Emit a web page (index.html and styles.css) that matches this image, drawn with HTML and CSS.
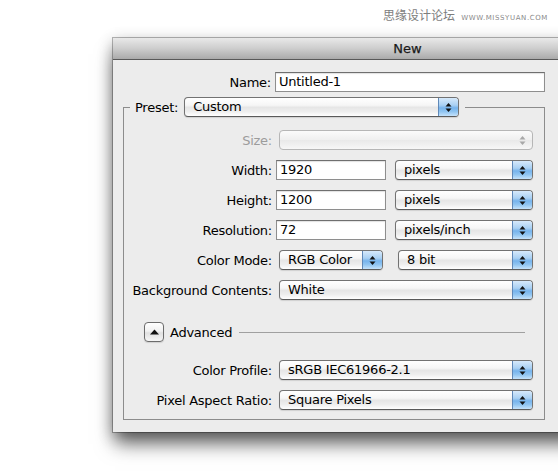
FILE: index.html
```html
<!DOCTYPE html>
<html>
<head>
<meta charset="utf-8">
<title>New</title>
<link rel="stylesheet" href="styles.css">
</head>
<body>
<div class="page">
  <div class="watermark"><span class="wm-cn">思缘设计论坛</span><span class="wm-en">WWW.MISSYUAN.COM</span></div>
  <div class="dialog">
    <div class="titlebar">New</div>
    <div class="dlg-body">
      <div class="row">
        <span class="lbl">Name:</span>
        <div class="field field-name">Untitled-1</div>
      </div>
      <fieldset class="group">
        <legend class="legend">
          <div class="legend-inner">
            <span class="lbl-preset">Preset:</span>
            <div class="popup popup-preset"><span class="val">Custom</span><span class="step"><svg width="7" height="11" viewBox="0 0 7 11"><polygon points="0.5,4.5 3.5,1 6.5,4.5"/><polygon points="0.5,6.5 3.5,10 6.5,6.5"/></svg></span></div>
          </div>
        </legend>
        <div class="rows">
          <div class="row">
            <span class="lbl lbl-disabled">Size:</span>
            <div class="popup popup-disabled popup-wide"><span class="val"></span><span class="step"><svg width="7" height="11" viewBox="0 0 7 11"><polygon points="0.5,4.5 3.5,1 6.5,4.5"/><polygon points="0.5,6.5 3.5,10 6.5,6.5"/></svg></span></div>
          </div>
          <div class="row">
            <span class="lbl">Width:</span>
            <div class="field field-num">1920</div>
            <div class="popup popup-unit"><span class="val">pixels</span><span class="step"><svg width="7" height="11" viewBox="0 0 7 11"><polygon points="0.5,4.5 3.5,1 6.5,4.5"/><polygon points="0.5,6.5 3.5,10 6.5,6.5"/></svg></span></div>
          </div>
          <div class="row">
            <span class="lbl">Height:</span>
            <div class="field field-num">1200</div>
            <div class="popup popup-unit"><span class="val">pixels</span><span class="step"><svg width="7" height="11" viewBox="0 0 7 11"><polygon points="0.5,4.5 3.5,1 6.5,4.5"/><polygon points="0.5,6.5 3.5,10 6.5,6.5"/></svg></span></div>
          </div>
          <div class="row">
            <span class="lbl">Resolution:</span>
            <div class="field field-num">72</div>
            <div class="popup popup-unit"><span class="val">pixels/inch</span><span class="step"><svg width="7" height="11" viewBox="0 0 7 11"><polygon points="0.5,4.5 3.5,1 6.5,4.5"/><polygon points="0.5,6.5 3.5,10 6.5,6.5"/></svg></span></div>
          </div>
          <div class="row">
            <span class="lbl">Color Mode:</span>
            <div class="popup popup-mode"><span class="val">RGB Color</span><span class="step"><svg width="7" height="11" viewBox="0 0 7 11"><polygon points="0.5,4.5 3.5,1 6.5,4.5"/><polygon points="0.5,6.5 3.5,10 6.5,6.5"/></svg></span></div>
            <div class="popup popup-bits"><span class="val">8 bit</span><span class="step"><svg width="7" height="11" viewBox="0 0 7 11"><polygon points="0.5,4.5 3.5,1 6.5,4.5"/><polygon points="0.5,6.5 3.5,10 6.5,6.5"/></svg></span></div>
          </div>
          <div class="row">
            <span class="lbl">Background Contents:</span>
            <div class="popup popup-wide"><span class="val">White</span><span class="step"><svg width="7" height="11" viewBox="0 0 7 11"><polygon points="0.5,4.5 3.5,1 6.5,4.5"/><polygon points="0.5,6.5 3.5,10 6.5,6.5"/></svg></span></div>
          </div>
          <div class="row adv-row">
            <span class="adv-btn"><svg width="9" height="6" viewBox="0 0 9 6"><polygon points="0,5.5 4.5,0.5 9,5.5"/></svg></span>
            <span class="adv-label">Advanced</span>
            <span class="adv-line"></span>
          </div>
          <div class="row profile-row">
            <span class="lbl">Color Profile:</span>
            <div class="popup popup-wide"><span class="val">sRGB IEC61966-2.1</span><span class="step"><svg width="7" height="11" viewBox="0 0 7 11"><polygon points="0.5,4.5 3.5,1 6.5,4.5"/><polygon points="0.5,6.5 3.5,10 6.5,6.5"/></svg></span></div>
          </div>
          <div class="row">
            <span class="lbl">Pixel Aspect Ratio:</span>
            <div class="popup popup-wide"><span class="val">Square Pixels</span><span class="step"><svg width="7" height="11" viewBox="0 0 7 11"><polygon points="0.5,4.5 3.5,1 6.5,4.5"/><polygon points="0.5,6.5 3.5,10 6.5,6.5"/></svg></span></div>
          </div>
        </div>
      </fieldset>
    </div>
  </div>
</div>
</body>
</html>
```

FILE: styles.css
```css
html, body {
  margin: 0;
  padding: 0;
  background: #ffffff;
  overflow: hidden;
}

body {
  width: 558px;
  height: 473px;
  font-family: "DejaVu Sans", "Noto Sans", sans-serif;
  font-size: 13px;
  letter-spacing: -0.25px;
  color: #000;
}

.page {
  width: 558px;
  height: 473px;
  overflow: hidden;
}

.watermark {
  height: 38px;
  box-sizing: border-box;
  padding: 7px 10px 0 0;
  display: flex;
  justify-content: flex-end;
  align-items: baseline;
  color: #7d7d7d;
  letter-spacing: 0;
}

.wm-cn {
  font-family: "Noto Sans CJK SC", sans-serif;
  font-size: 12px;
  line-height: 16px;
  margin-right: 6px;
}

.wm-en {
  font-family: "DejaVu Sans", sans-serif;
  font-size: 7px;
  letter-spacing: 0.6px;
  color: #8a8a8a;
}

.dialog {
  margin-left: 113px;
  width: 589px;
  background: #ececec;
  box-shadow: 0 0 0 1px rgba(0, 0, 0, 0.28), 0 14px 18px -2px rgba(0, 0, 0, 0.55), 0 4px 14px rgba(0, 0, 0, 0.3);
}

.titlebar {
  height: 21px;
  line-height: 22px;
  text-align: center;
  border-bottom: 1px solid #585858;
  background: linear-gradient(#e9e9e9, #cdcdcd 50%, #aaaaaa);
  color: #1a1a1a;
  letter-spacing: 0;
  -webkit-text-stroke: 0.25px #1a1a1a;
}

.dlg-body {
  padding: 12px 0 12px 10px;
}

.row {
  display: flex;
  align-items: center;
  height: 20px;
}

.lbl {
  width: 148px;
  margin-right: 4px;
  text-align: right;
  white-space: nowrap;
}

.lbl-disabled {
  color: #9c9c9c;
}

.field {
  height: 20px;
  box-sizing: border-box;
  border: 1px solid #8e8e8e;
  border-top-color: #6f6f6f;
  background: #fff;
  padding-left: 3px;
  line-height: 18px;
  box-shadow: inset 0 1px 1px rgba(0, 0, 0, 0.12);
  white-space: nowrap;
}

.field-name {
  width: 270px;
}

.field-num {
  width: 110px;
}

.group {
  width: 422px;
  box-sizing: border-box;
  margin: 5px 0 0 0;
  padding: 13px 0 9px 0;
  border: 1px solid #8c8c8c;
  min-width: 0;
}

.legend {
  margin-left: 6px;
  padding: 0 6px 0 5px;
}

.legend-inner {
  display: flex;
  align-items: center;
  height: 20px;
}

.lbl-preset {
  margin-right: 6px;
}

.popup-preset {
  width: 275px;
}

.rows {
  display: flex;
  flex-direction: column;
  gap: 10px;
}

.popup {
  display: flex;
  align-items: stretch;
  height: 20px;
  box-sizing: border-box;
  border: 1px solid #727272;
  border-bottom-color: #5a5a5a;
  border-radius: 4px;
  background: linear-gradient(#ffffff 0%, #f6f6f6 40%, #e6e6e6 52%, #eeeeee 75%, #ffffff 100%);
  overflow: hidden;
  box-shadow: 0 1px 1px rgba(0, 0, 0, 0.12);
}

.popup .val {
  flex: 1;
  padding-left: 8px;
  line-height: 18px;
  white-space: nowrap;
  overflow: hidden;
}

.popup .step {
  width: 19px;
  display: flex;
  align-items: center;
  justify-content: center;
  background: linear-gradient(#d6e9fb 0%, #a9d0f3 40%, #76b3ec 55%, #8fc4f1 75%, #c4e2fb 100%);
  border-left: 1px solid #5f88b8;
}

.popup .step svg {
  fill: #111;
}

.popup-disabled {
  border-color: #b6b6b6;
  box-shadow: none;
  background: linear-gradient(#fbfbfb, #efefef 50%, #e9e9e9 52%, #f7f7f7);
}

.popup-disabled .step {
  background: none;
  border-left: none;
}

.popup-disabled .step svg {
  fill: #a8a8a8;
}

.popup-wide {
  margin-left: 3px;
  width: 254px;
}

.popup-unit {
  margin-left: 9px;
  width: 138px;
}

.popup-mode {
  margin-left: 3px;
  width: 104px;
}

.popup-bits {
  margin-left: 15px;
  width: 135px;
}

.adv-row {
  margin-top: 12px;
}

.adv-btn {
  width: 20px;
  height: 20px;
  box-sizing: border-box;
  margin-left: 20px;
  border: 1px solid #6c6c6c;
  border-radius: 4px;
  background: linear-gradient(#ffffff, #f1f1f1 45%, #e0e0e0 55%, #f6f6f6);
  display: flex;
  align-items: center;
  justify-content: center;
  box-shadow: 0 1px 1px rgba(0, 0, 0, 0.12);
}

.adv-btn svg {
  fill: #111;
}

.adv-label {
  margin-left: 6px;
}

.adv-line {
  flex: 1;
  height: 1px;
  margin: 0 19px 0 7px;
  background: #a0a0a0;
}

.profile-row {
  margin-top: 8px;
}
```
